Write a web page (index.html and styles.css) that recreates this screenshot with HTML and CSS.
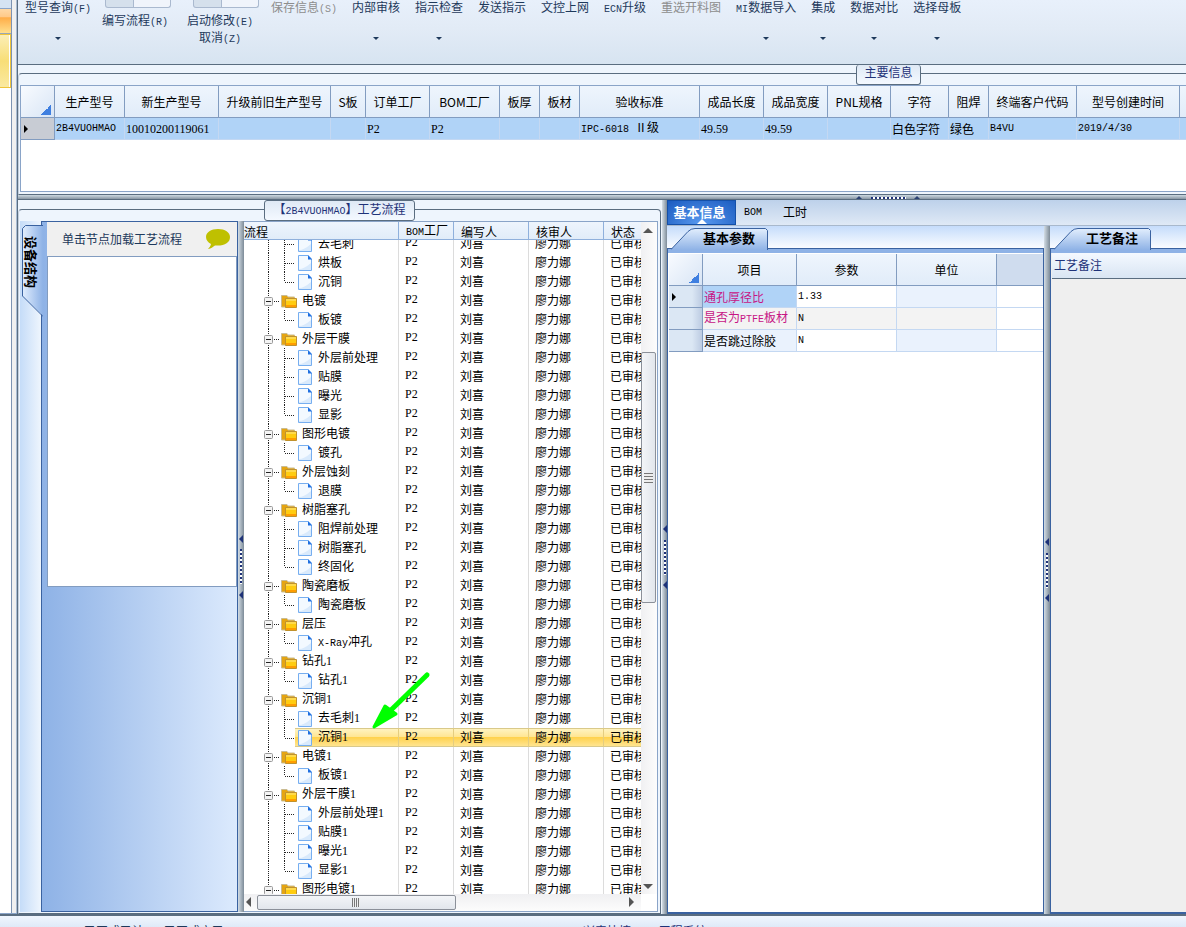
FILE: index.html
```html
<!DOCTYPE html>
<html lang="zh-CN">
<head>
<meta charset="utf-8">
<title>EMS工程系统</title>
<link rel="stylesheet" href="styles.css">
</head>
<body>
<div class="shell">
  <aside class="dock"><div class="dock-blue"></div><div class="dock-orange"></div><div class="dock-yellow"></div></aside>
  <main class="main">
    <nav class="ribbon">
      <button class="rb rb-first">型号查询<span class="m">(F)</span><i class="caret"></i></button>
      <div class="rb-stack"><span class="mini"></span><button>编写流程<span class="m">(R)</span></button></div>
      <div class="rb-stack rb-wide"><span class="mini"></span><button>启动修改<span class="m">(E)</span></button><button class="third">取消<span class="m">(Z)</span></button></div>
      <button class="rb rb-save" disabled>保存信息<span class="m">(S)</span></button>
      <button class="rb">内部审核<i class="caret"></i></button>
      <button class="rb">指示检查<i class="caret"></i></button>
      <button class="rb">发送指示</button>
      <button class="rb">文控上网</button>
      <button class="rb"><span class="m">ECN</span>升级</button>
      <button class="rb" disabled>重选开料图</button>
      <button class="rb"><span class="m">MI</span>数据导入<i class="caret"></i></button>
      <button class="rb">集成<i class="caret"></i></button>
      <button class="rb">数据对比<i class="caret"></i></button>
      <button class="rb">选择母板<i class="caret"></i></button>
    </nav>

    <section class="group info">
      <h2 class="legend info-legend">主要信息</h2>
      <div class="group-box info-box">
        <div class="grid-frame">
          <table class="grid">
            <colgroup><col class="w34"><col class="w70"><col class="w94"><col class="w112"><col class="w35"><col class="w64"><col class="w70"><col class="w40"><col class="w40"><col class="w120"><col class="w64"><col class="w64"><col class="w63"><col class="w58"><col class="w40"><col class="w88"><col class="w103"><col></colgroup>
            <thead><tr><th class="corner"></th><th>生产型号</th><th>新生产型号</th><th>升级前旧生产型号</th><th>S板</th><th>订单工厂</th><th>BOM工厂</th><th>板厚</th><th>板材</th><th>验收标准</th><th>成品长度</th><th>成品宽度</th><th>PNL规格</th><th>字符</th><th>阻焊</th><th>终端客户代码</th><th>型号创建时间</th><th></th></tr></thead>
            <tbody><tr class="picked"><td class="rowhead current"></td><td class="m">2B4VUOHMAO</td><td class="n">10010200119061</td><td></td><td></td><td class="n">P2</td><td class="n">P2</td><td></td><td></td><td><span class="m">IPC-6018 </span>Ⅱ级</td><td class="n">49.59</td><td class="n">49.59</td><td></td><td>白色字符</td><td>绿色</td><td class="m">B4VU</td><td class="m">2019/4/30</td><td></td></tr></tbody>
          </table>
        </div>
      </div>
    </section>
    <div class="split-h"><span class="grip grip-h"><i class="up"></i><i class="dots"></i><i class="up"></i></span></div>

    <div class="work">
      <section class="group process">
        <h2 class="legend process-legend">【<span class="m">2B4VUOHMAO</span>】工艺流程</h2>
        <div class="group-box process-box">
          <div class="device">
            <div class="side-tabs">
              <button class="side-tab">
                <svg width="21" height="92" viewBox="0 0 21 92"><defs><linearGradient id="sg"><stop offset="0" stop-color="#dfecfd"/><stop offset="1" stop-color="#8eb2e6"/></linearGradient></defs><path d="M21 1H4L1 4V71L21 91Z" fill="url(#sg)"/><path d="M21 .5H3.500L.5 3.500V71L21 91.500" fill="none" stroke="#3a62a0"/></svg>
                <span>设备结构</span>
              </button>
            </div>
            <div class="device-panel">
              <div class="hint"><span>单击节点加载工艺流程</span>
                <svg width="26" height="22" viewBox="0 0 26 22"><path d="M13 1C6 1 1 4.500 1 9c0 3 2 5.500 5 7-.5 2-1.500 3.500-3 5 3-.5 5-2 7-3.500 9 .8 15-2.500 15-8.500C25 4.500 20 1 13 1Z" fill="#bfc000"/></svg>
              </div>
              <div class="device-list"></div>
            </div>
          </div>
          <div class="split-v wide"><span class="grip grip-v"><i class="left"></i><i class="dots"></i><i class="left"></i></span></div>
          <div class="tree">
            <div class="tree-head">
              <table class="tree-table"><colgroup><col class="w155"><col class="w55"><col class="w75"><col class="w75"><col></colgroup>
              <thead><tr><th>流程</th><th><span class="m">BOM</span>工厂</th><th>编写人</th><th>核审人</th><th>状态</th></tr></thead></table>
            </div>
            <div class="tree-body">
              <table class="tree-table"><colgroup><col class="w155"><col class="w55"><col class="w75"><col class="w75"><col></colgroup>
              <tbody id="rows"></tbody></table>
            </div>
            <div class="vbar"><i class="arrow up"></i><span class="thumb"></span><i class="arrow down"></i></div>
            <div class="hbar"><i class="arrow left"></i><span class="thumb"></span><i class="arrow right"></i></div>
            <svg class="pointer" width="60" height="60" viewBox="0 0 60 60"><path d="M56 4L18 41" stroke="#0f0" stroke-width="5" stroke-linecap="round"/><path d="M3 56L14 35L25 43Z" fill="#0f0" stroke="#0f0" stroke-width="3" stroke-linejoin="round"/></svg>
          </div>
        </div>
      </section>
      <div class="split-v"><span class="grip grip-v"><i class="left"></i><i class="dots"></i><i class="left"></i></span></div>
      <section class="detail">
        <div class="tabs">
          <button class="tab active">基本信息</button>
          <button class="tab"><span class="m">BOM</span></button>
          <button class="tab">工时</button>
        </div>
        <div class="panes">
          <div class="pane params">
            <div class="strip"><button class="slant">
              <svg width="98" height="22" viewBox="0 0 98 22"><defs><linearGradient id="tg" x2="0" y2="1"><stop offset="0" stop-color="#e2eefd"/><stop offset="1" stop-color="#8eb2e6"/></linearGradient></defs><path d="M0 21.500L17 3.500Q20 .5 24 .5H94.500L96.500 2.500V22H0Z" fill="url(#tg)"/><path d="M0 21.500L17 3.500Q20 .5 24 .5H94.500L96.500 2.500V22" fill="none" stroke="#3a62a0"/></svg>
              <span>基本参数</span></button></div>
            <div class="pane-body">
              <table class="grid">
                <colgroup><col class="w34"><col class="w94"><col class="w100"><col class="w100"><col></colgroup>
                <thead><tr><th class="corner"></th><th>项目</th><th>参数</th><th>单位</th><th class="blank"></th></tr></thead>
                <tbody>
                <tr><td class="rowhead current"></td><td class="key sel">通孔厚径比</td><td class="m val">1.33</td><td class="soft"></td><td></td></tr>
                <tr><td class="rowhead"></td><td class="key alt">是否为<span class="m">PTFE</span>板材</td><td class="m val alt">N</td><td class="alt"></td><td></td></tr>
                <tr><td class="rowhead"></td><td class="soft">是否跳过除胶</td><td class="m val">N</td><td class="soft"></td><td></td></tr>
                </tbody>
              </table>
            </div>
          </div>
          <div class="split-v wide"><span class="grip grip-v"><i class="left"></i><i class="dots"></i><i class="left"></i></span></div>
          <div class="pane notes">
            <div class="strip"><button class="slant">
              <svg width="98" height="22" viewBox="0 0 98 22"><path d="M0 21.500L17 3.500Q20 .5 24 .5H94.500L96.500 2.500V22H0Z" fill="url(#tg)"/><path d="M0 21.500L17 3.500Q20 .5 24 .5H94.500L96.500 2.500V22" fill="none" stroke="#3a62a0"/></svg>
              <span>工艺备注</span></button></div>
            <div class="pane-body notes-body"><div class="notes-title">工艺备注</div></div>
          </div>
        </div>
      </section>
    </div>
  </main>
</div>
<footer class="status"><span class="st-a">已正式已计</span><span class="st-b">已正式宝已</span><span class="st-c">兴森快捷<span class="n"> EMS</span>工程系统<span class="n"> Version: 1.0.0.0</span></span></footer>
<script src="tree.js"></script>
</body>
</html>
```
FILE: tree.js
```js
const steps = [
  ["", ["去毛刺", "烘板", "沉铜"]],
  ["电镀", ["板镀"]],
  ["外层干膜", ["外层前处理", "贴膜", "曝光", "显影"]],
  ["图形电镀", ["镀孔"]],
  ["外层蚀刻", ["退膜"]],
  ["树脂塞孔", ["阻焊前处理", "树脂塞孔", "终固化"]],
  ["陶瓷磨板", ["陶瓷磨板"]],
  ["层压", ["X-Ray冲孔"]],
  ["钻孔1", ["钻孔1"]],
  ["沉铜1", ["去毛刺1", "沉铜1"]],
  ["电镀1", ["板镀1"]],
  ["外层干膜1", ["外层前处理1", "贴膜1", "曝光1", "显影1"]],
  ["图形电镀1", []]
];

const latin = s => s.replace(/[A-Za-z-]+/g, '<b class="m">$&</b>').replace(/\d+/g, '<b class="n">$&</b>');
const line = d => `<path d="${d}" stroke="#222" stroke-dasharray="1 1" fill="none"/>`;

const folder = `<svg width="58" height="19">${line("M24.5 0V19")}${line("M30 10.5H36")}
<rect x="20.500" y="6.500" width="8" height="8" rx="1" fill="#f4f4f4" stroke="#999"/><path d="M22 10.500H27" stroke="#222"/>
<path d="M37.500 16V4.500H43L44 6H50.500V16Z" fill="#e5a512" stroke="#c9bb92"/>
<path d="M41.500 16.500V7.500L52.500 7.500V16.500Z" fill="#ffcc10" stroke="#c0922e"/><path d="M42 9H52" stroke="#ffe88a"/><path d="M42 15H52" stroke="#ff9d00" stroke-width="2"/></svg>`;

const page = (last, on) => `<svg width="74" height="19">${on ? '<path d="M0 0H51V19H0Z" fill="#fff"/>' : ""}${line("M24.5 0V19")}${line(last ? "M40.5 0V10" : "M40.5 0V19")}${line("M41 10.5H51")}
<path d="M54.500 2.500H64L67.500 6V17.500H54.500Z" fill="#f3f9ff" stroke="#76aef0"/><path d="M55 17H67V10Q60 16 55 16Z" fill="#d9eafc"/><path d="M64 2V6.500H68Z" fill="#1f6fe0"/></svg>`;

const row = (icon, name, cls) => `<tr class="${cls}"><td><span class="node">${icon}<span>${latin(name)}</span></span></td><td class="n">P2</td><td>刘喜</td><td>廖力娜</td><td>已审核</td></tr>`;

document.getElementById("rows").innerHTML = steps.map(([name, kids], g) =>
  (name ? row(folder, name, "") : "") +
  kids.map((k, i) => {
    const on = g === 9 && i === 1;
    return row(page(i === kids.length - 1, on), k, on ? "selected" : "");
  }).join("")
).join("");
```
FILE: styles.css
```css
* { box-sizing: border-box; }
body {
  margin: 0; height: 100vh; overflow: hidden; display: flex; flex-direction: column;
  font: 12px/14px "Noto Sans CJK SC", sans-serif; color: #000; background: #eef5fd;
}
button { font: inherit; color: inherit; background: none; border: 0; padding: 0; margin: 0; white-space: nowrap; }
h2 { margin: 0; font-size: 12px; font-weight: 400; }
b { font-weight: 400; }
svg { display: block; flex: none; }
.m { font-family: "Liberation Mono", monospace; font-size: 10px; white-space: pre; }
.n { font-family: "Liberation Serif", serif; white-space: pre; }

.shell { flex: 1; min-height: 0; display: flex; }
.dock { width: 17px; flex: none; background: linear-gradient(to right, #fff 11px, #7d93b2 11px, #7d93b2 12px, #f0f0f0 12px, #f0f0f0 16px, #a9bcd4 16px); border-bottom: 1px solid #8aa4c8; }
.dock-blue { width: 11px; height: 9px; background: #d5e3f3; border-bottom: 1px solid #8aa4c8; }
.dock-orange { width: 11px; height: 25px; background: linear-gradient(#ffd9a6, #ffc988 34%, #ffad48 36%, #ffdf8c); border-bottom: 1px solid #9aa7b5; }
.dock-yellow { width: 11px; height: 54px; background: linear-gradient(#fbeeb5, #f8de77 50%, #fae9a0); border: 1px solid #efc43a; border-left: 0; box-shadow: inset -1px 0 #fff; }
.main { flex: 1; min-width: 0; display: flex; flex-direction: column; border-left: 1px solid #5a6d80; }

.ribbon { height: 65px; flex: none; display: flex; color: #1e395b; overflow: hidden; white-space: nowrap; background: linear-gradient(#e8f0fb, #e2ebf6 45%, #d7e4f1); border-bottom: 1px solid #5a6d80; }
.rb { display: flex; align-items: baseline; justify-content: center; flex: none; padding: 0 7px; margin-right: 1px; position: relative; height: 48px; }
.rb:disabled { color: #8d8d8d; }
.rb-first { width: 80px; padding: 0; }
.rb-save { width: 75px; padding: 0 5px 0 0; }
.caret { position: absolute; left: calc(50% - 3px); top: 37px; border: 3px solid transparent; border-top-color: #1e395b; border-bottom: 0; }
.rb-stack { width: 72px; flex: none; display: grid; grid-template-rows: 14px 14px 20px; justify-items: center; align-items: center; }
.rb-wide { width: 98px; }
.mini { width: 66px; height: 8px; margin-left: 6px; align-self: start; border: 1px solid #aab9cf; border-top: 0; border-radius: 0 0 3px 3px; background: linear-gradient(to right, #d5e0ec 27px, #aab9cf 27px, #aab9cf 28px, #f0f4fb 28px); }
.rb-wide .mini { margin-left: 11px; }

.group { position: relative; padding-top: 8px; background: #eef5fd; }
.group-box { border: 1px solid #5a6d80; border-radius: 4px 4px 0 0; }
.legend { position: absolute; top: 0; border: 1px solid #5a6d80; border-radius: 3px; color: #1e3278; text-align: center; background: linear-gradient(#dfe9f5, #f4f9ff); white-space: nowrap; }
.info { height: 130px; flex: none; }
.info-legend { left: 838px; width: 65px; height: 20px; border-top: 0; }
.info-box { height: 122px; border-left-color: #c2cfde; border-right: 0; border-top-right-radius: 0; padding: 11px 0 2px 1px; }
.grid-frame { height: 107px; background: #fff; border: 1px solid #8aa4c8; border-right: 0; overflow: hidden; }

.grid { width: 100%; table-layout: fixed; border-collapse: separate; border-spacing: 0; white-space: nowrap; }
.grid th { height: 32px; padding: 0; font-weight: 400; background: linear-gradient(#eef5fd, #e1ecf9); border-right: 1px solid #829cc0; border-bottom: 1px solid #829cc0; }
.grid th.blank { background: #cfdcee; border-right: 0; }
.grid td { height: 22px; padding: 0 0 0 1px; border-right: 1px solid #c4d8f2; border-bottom: 1px solid #c4d8f2; overflow: hidden; }
.grid th:last-child, .grid td:last-child { border-right: 0; }
.grid .picked td { background: #b0d3f7; }
.grid .corner { background: linear-gradient(135deg, transparent 50%, #3f7fe0 50%) right 3px bottom 2px / 10px 10px no-repeat, linear-gradient(135deg, #f8fbff, #d8e5f5); }
.grid td.rowhead { background: linear-gradient(to right, #dbe7f4 70%, #bccbe2); border-right-color: #829cc0; border-bottom-color: #829cc0; padding-left: 3px; }
.grid .picked td.rowhead { background: #c8ccd4; }
.rowhead.current::before { content: ""; display: block; width: 0; border: 4px solid transparent; border-left-color: #000; border-right: 0; }
.w34 { width: 34px; } .w35 { width: 35px; } .w40 { width: 40px; } .w55 { width: 55px; } .w58 { width: 58px; }
.w63 { width: 63px; } .w64 { width: 64px; } .w70 { width: 70px; } .w75 { width: 75px; } .w88 { width: 88px; }
.w94 { width: 94px; } .w100 { width: 100px; } .w103 { width: 103px; } .w112 { width: 112px; } .w120 { width: 120px; } .w155 { width: 155px; }

.split-h { height: 5px; flex: none; display: flex; justify-content: center; background: linear-gradient(#cdd9e2, #8d9ba8 75%, #5a6d80 80%); padding-left: 572px; }
.split-v { width: 5px; flex: none; display: flex; align-items: center; justify-content: center; background: linear-gradient(to right, #d3dde5, #7d8b98); }
.split-v.wide { width: 6px; }
.grip { display: flex; align-items: center; justify-content: space-between; }
.grip-h { width: 64px; }
.grip-v { flex-direction: column; height: 64px; }
.grip .up { border: 3px solid transparent; border-bottom-color: #2b4274; border-top: 0; }
.grip .left { border: 4px solid transparent; border-right-color: #1e3278; border-left: 0; }
.grip-h .dots { width: 35px; height: 2px; background: repeating-linear-gradient(to right, #1e3278 0 2px, #fff 2px 4px); }
.grip-v .dots { width: 2px; height: 35px; background: repeating-linear-gradient(#1e3278 0 2px, #fff 2px 4px); }

.work { flex: 1; min-height: 0; display: flex; }
.process { width: 644px; flex: none; padding: 9px 1px 0 0; display: flex; }
.process-legend { left: 246px; width: 151px; height: 21px; line-height: 15px; }
.process-box { flex: 1; min-width: 0; display: flex; border-left-color: #c2cfde; padding: 11px 2px 1px 1px; }
.device { width: 218px; flex: none; display: flex; }
.side-tabs { width: 21px; padding: 4px 0 0 2px; background: linear-gradient(to right, #c5dcf8, #eef5fd); }
.side-tab { position: relative; display: block; width: 21px; height: 92px; z-index: 1; }
.side-tab span { position: absolute; left: 2px; top: 11px; writing-mode: vertical-rl; text-orientation: sideways; font-size: 13px; font-weight: 700; }
.device-panel { flex: 1; border: 1px solid #3a62a0; padding-left: 5px; background: linear-gradient(to right, #8eb2e6, #dceafd); }
.hint { height: 34px; display: flex; align-items: center; justify-content: space-between; padding: 0 6px 0 15px; background: #f0f0f0; color: #1e395b; }
.device-list { height: 331px; background: #fff; border: 1px solid #829cc0; }

.tree { position: relative; flex: 1; min-width: 0; display: grid; grid-template: 18px 1fr 17px / 1fr 16px; background: #fff; border: 1px solid #8aa4c8; border-left: 0; }
.tree-head, .tree-body { min-width: 0; overflow: hidden; }
.tree-head { background: linear-gradient(#eef5fd, #e1ecf9); border-bottom: 1px solid #8fb0dc; }
.tree-body { min-height: 0; background: #fff; }
.tree-body table { margin-top: -6px; }
.tree-table { width: 100%; table-layout: fixed; border-collapse: separate; border-spacing: 0; white-space: nowrap; }
.tree-table th { height: 17px; line-height: 15px; padding: 0 0 2px 7px; font-weight: 400; text-align: left; border-right: 1px solid #8fb0dc; }
.tree-table th:first-child { padding-left: 0; }
.tree-table td { height: 19px; line-height: 17px; padding: 0 0 2px 6px; border-right: 1px solid #dcdcdc; overflow: hidden; }
.tree-table td:first-child { padding: 0; }
.tree-table th:last-child, .tree-table td:last-child { border-right: 0; }
.node { display: flex; align-items: center; height: 19px; }
.node > span { padding-bottom: 2px; }
.selected td { background: linear-gradient(#d9c98a 1px, #fff3c0 1px, #ffe694 45%, #ffd24e 50%, #ffe48f 94%, #d9c98a 95%); border-right-color: #e4cd80; }
.vbar { grid-area: 1 / 2 / 3 / 3; position: relative; background: linear-gradient(to right, #f0f0f2, #fcfcfc); }
.hbar { grid-area: 3 / 1; position: relative; background: linear-gradient(#f0f0f2, #fcfcfc); }
.thumb { position: absolute; border: 1px solid #8b9099; border-radius: 2px; }
.vbar .thumb { left: 0; top: 130px; width: 15px; height: 251px; background: repeating-linear-gradient(#777 0 1px, #eee 1px 3px) center / 9px 10px no-repeat, linear-gradient(to right, #f3f5f8, #e2e6ec); }
.hbar .thumb { left: 13px; top: 1px; width: 50%; height: 15px; background: repeating-linear-gradient(to right, #777 0 1px, #eee 1px 2px) center / 8px 9px no-repeat, linear-gradient(#f3f5f8, #e2e6ec); }
.arrow { position: absolute; border: 5px solid transparent; }
.arrow.up { left: 2px; top: 6px; border-top: 0; border-bottom-color: #555; }
.arrow.down { left: 2px; bottom: 5px; border-bottom: 0; border-top-color: #555; }
.arrow.left { left: 2px; top: 3px; border-left: 0; border-right-color: #555; }
.arrow.right { right: 7px; top: 3px; border-right: 0; border-left-color: #555; }
.pointer { position: absolute; left: 127px; top: 449px; }

.detail { flex: 1; min-width: 0; display: flex; flex-direction: column; }
.tabs { height: 26px; flex: none; display: flex; background: linear-gradient(#bdd1ea, #dfe9f6); border-bottom: 1px solid #a8b8cc; }
.tab { padding: 0 8px 2px; }
.tab + .tab { margin-right: 5px; }
.tab.active { position: relative; width: 69px; padding: 0 4px 2px 0; color: #fff; font-size: 13px; font-weight: 700; background: radial-gradient(ellipse at 50% 100%, #5a9af0, #1b5cc0); border: 1px solid #1450a8; }
.tab.active::after { content: ""; position: absolute; left: 29px; bottom: 0; border: 5px solid transparent; border-top: 0; border-bottom-color: #fff; }
.panes { flex: 1; min-height: 0; display: flex; }
.pane { display: flex; flex-direction: column; min-width: 0; }
.params { flex: 0 0 377px; }
.notes { flex: 1; }
.strip { height: 22px; flex: none; padding: 2px 0 0 4px; background: linear-gradient(#c5dcfb, #fafcff); }
.slant { position: relative; display: block; width: 98px; height: 22px; z-index: 1; }
.slant span { position: absolute; left: 32px; top: 3px; font-size: 13px; font-weight: 700; white-space: nowrap; }
.pane-body { flex: 1; min-height: 0; overflow: hidden; border: 1px solid #3a62a0; border-bottom-width: 2px; background: linear-gradient(#8eb2e6 4px, #fff 4px); padding: 5px 0 0 1px; }
.pane-body.notes-body { border-right: 0; background: linear-gradient(#8eb2e6 4px, #efefef 4px); padding-top: 4px; }
.key { color: #c71585; }
.grid td.sel { background: #b0d3f7; }
.grid td.soft { background: #eaf2fd; }
.grid td.alt { background: #f3f3f3; }
.notes-title { height: 26px; padding: 5px 2px; color: #1e3278; background: linear-gradient(#f4f9ff, #d9e5f3); border-bottom: 1px solid #5a6d80; }

.status { height: 13px; flex: none; display: flex; overflow: hidden; color: #1e395b; white-space: nowrap; padding: 8px 0 0 84px; background: linear-gradient(#f0f6fe, #dfeaf8); border-top: 2px solid #5a6d80; }
.st-a { width: 80px; flex: none; }
.st-b { width: 419px; flex: none; }
.st-c { color: #1e3278; }
```
